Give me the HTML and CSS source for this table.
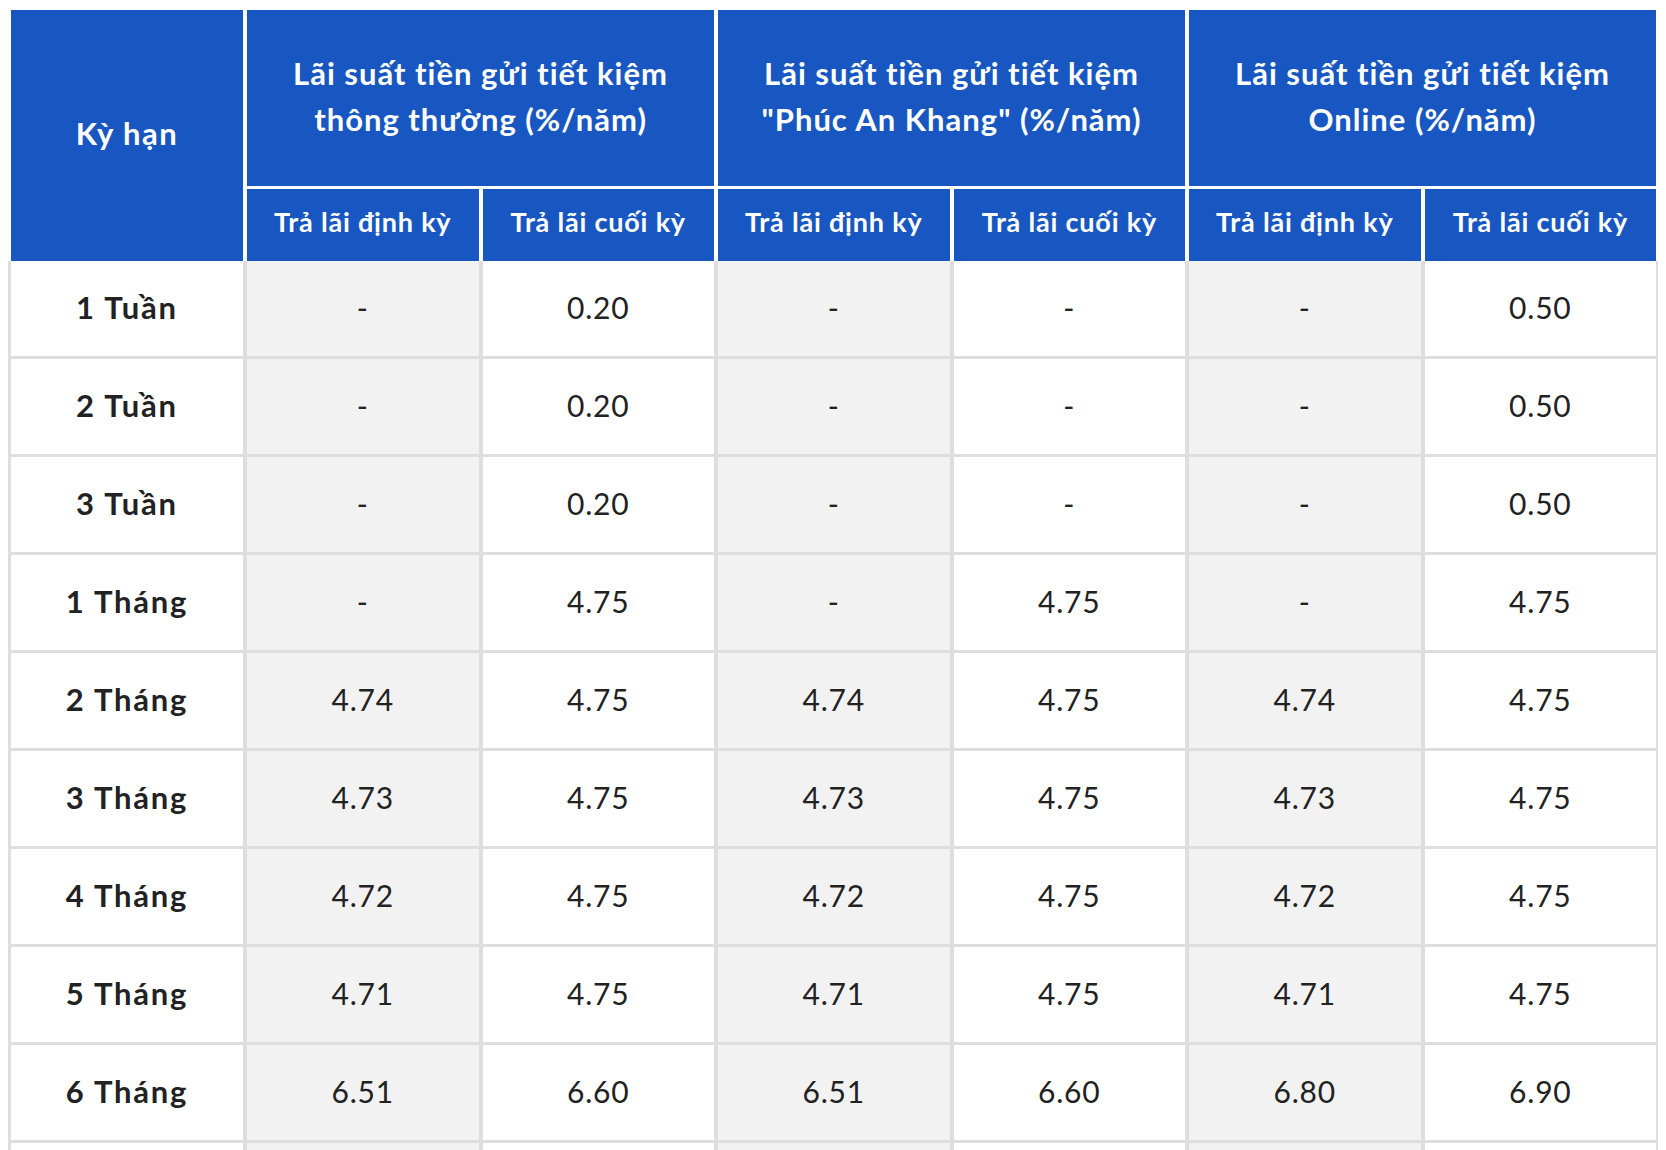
FILE: index.html
```html
<!DOCTYPE html>
<html lang="vi">
<head>
<meta charset="utf-8">
<title>Lãi suất tiền gửi tiết kiệm</title>
<link rel="stylesheet" href="styles.css">
</head>
<body>
<table class="rate-table">
  <colgroup>
    <col class="col-term">
    <col class="col-rate"><col class="col-rate">
    <col class="col-rate"><col class="col-rate">
    <col class="col-rate"><col class="col-rate">
    <col class="col-rate">
  </colgroup>
  <thead>
    <tr class="head-group">
      <th rowspan="2" class="term-head">Kỳ hạn</th>
      <th colspan="2">Lãi suất tiền gửi tiết kiệm<br>thông thường (%/năm)</th>
      <th colspan="2">Lãi suất tiền gửi tiết kiệm<br>"Phúc An Khang" (%/năm)</th>
      <th colspan="2">Lãi suất tiền gửi tiết kiệm<br>Online (%/năm)</th>
      <th></th>
    </tr>
    <tr class="head-sub">
      <th>Trả lãi định kỳ</th>
      <th>Trả lãi cuối kỳ</th>
      <th>Trả lãi định kỳ</th>
      <th>Trả lãi cuối kỳ</th>
      <th>Trả lãi định kỳ</th>
      <th>Trả lãi cuối kỳ</th>
      <th></th>
    </tr>
  </thead>
  <tbody>
    <tr><td>1 Tuần</td><td>-</td><td>0.20</td><td>-</td><td>-</td><td>-</td><td>0.50</td><td></td></tr>
    <tr><td>2 Tuần</td><td>-</td><td>0.20</td><td>-</td><td>-</td><td>-</td><td>0.50</td><td></td></tr>
    <tr><td>3 Tuần</td><td>-</td><td>0.20</td><td>-</td><td>-</td><td>-</td><td>0.50</td><td></td></tr>
    <tr><td>1 Tháng</td><td>-</td><td>4.75</td><td>-</td><td>4.75</td><td>-</td><td>4.75</td><td></td></tr>
    <tr><td>2 Tháng</td><td>4.74</td><td>4.75</td><td>4.74</td><td>4.75</td><td>4.74</td><td>4.75</td><td></td></tr>
    <tr><td>3 Tháng</td><td>4.73</td><td>4.75</td><td>4.73</td><td>4.75</td><td>4.73</td><td>4.75</td><td></td></tr>
    <tr><td>4 Tháng</td><td>4.72</td><td>4.75</td><td>4.72</td><td>4.75</td><td>4.72</td><td>4.75</td><td></td></tr>
    <tr><td>5 Tháng</td><td>4.71</td><td>4.75</td><td>4.71</td><td>4.75</td><td>4.71</td><td>4.75</td><td></td></tr>
    <tr><td>6 Tháng</td><td>6.51</td><td>6.60</td><td>6.51</td><td>6.60</td><td>6.80</td><td>6.90</td><td></td></tr>
    <tr><td></td><td></td><td></td><td></td><td></td><td></td><td></td><td></td></tr>
  </tbody>
</table>
</body>
</html>
```

FILE: styles.css
```css
html {
  overflow: hidden;
}

body {
  margin: 8px;
  background: #ffffff;
  font-family: Lato, "Noto Sans", "DejaVu Sans", sans-serif;
  color: #222222;
}

.rate-table {
  border-collapse: separate;
  border-spacing: 0;
  table-layout: fixed;
  width: 1887.5px;
}

.col-term {
  width: 239px;
}

.col-rate {
  width: 235.5px;
}

.rate-table th,
.rate-table td {
  padding: 0;
  text-align: center;
  vertical-align: middle;
}

.rate-table th {
  background: #1857c2;
  color: #ffffff;
  font-weight: 700;
  border-right: 4px solid #ffffff;
  border-bottom: 3px solid #ffffff;
}

.head-group {
  height: 181px;
}

.head-group th {
  border-top: 2px solid #ffffff;
  font-size: 31px;
  line-height: 46px;
  letter-spacing: 1px;
  padding-bottom: 4px;
}

.head-group .term-head {
  border-left: 3px solid #ffffff;
  border-bottom: 0;
  padding-bottom: 6px;
  letter-spacing: 1.5px;
}

.head-sub {
  height: 72px;
}

.head-sub th {
  border-bottom: 0;
  font-size: 27px;
  line-height: 32px;
  letter-spacing: 0.8px;
  padding-bottom: 6px;
}

.rate-table tbody tr {
  height: 98px;
}

.rate-table td {
  font-size: 30px;
  line-height: 36px;
  font-weight: 400;
  letter-spacing: 0.8px;
  padding-bottom: 4px;
  border-right: 4px solid #dedede;
  border-bottom: 3px solid #dedede;
}

.rate-table td:first-child {
  border-left: 3px solid #dedede;
  font-size: 31px;
  font-weight: 700;
  letter-spacing: 1.8px;
}

.rate-table td:nth-child(even) {
  background: #f2f2f2;
}
```
